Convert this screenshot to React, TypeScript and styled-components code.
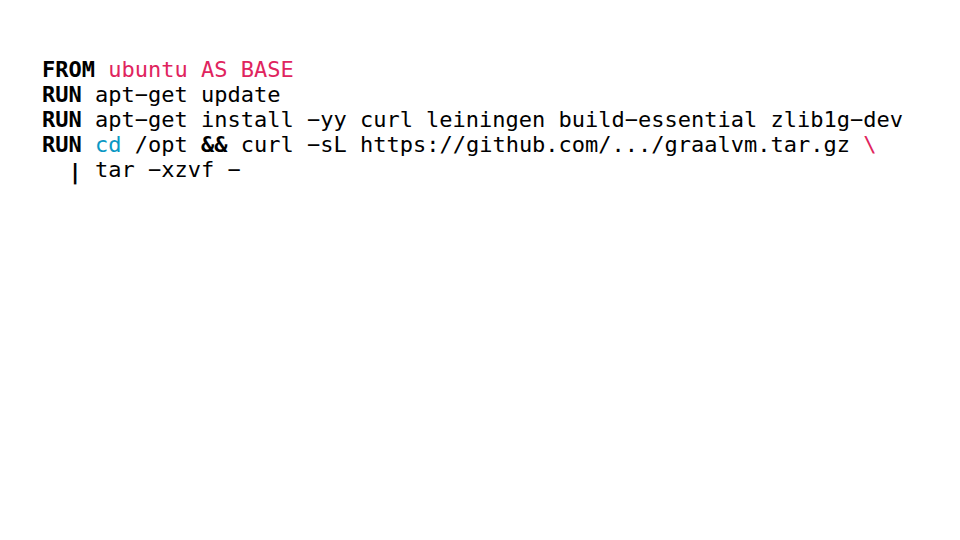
import React from "react";
import styled, { createGlobalStyle } from "styled-components";

const Global = createGlobalStyle`
  html, body { margin: 0; padding: 0; background: #ffffff; }
`;

const Slide = styled.div`
  width: 960px;
  height: 540px;
  box-sizing: border-box;
  padding: 57px 0 0 42px;
  background: #ffffff;
`;

const Code = styled.pre`
  margin: 0;
  font-family: "DejaVu Sans Mono", monospace;
  font-size: 22px;
  line-height: 25px;
  color: #000000;
`;

const Kw = styled.span`
  font-weight: bold;
`;

const Pipe = styled.span`
  font-weight: bold;
  vertical-align: -2px;
`;

const Str = styled.span<{ $tone: "red" | "cyan" }>`
  color: ${(p) => (p.$tone === "red" ? "#e0245e" : "#0a98c4")};
`;

export default function App() {
  return (
    <>
      <Global />
      <Slide>
        <Code>
          <Kw>FROM</Kw> <Str $tone="red">ubuntu AS BASE</Str>
          {"\n"}
          <Kw>RUN</Kw> apt−get update
          {"\n"}
          <Kw>RUN</Kw> apt−get install −yy curl leiningen build−essential zlib1g−dev
          {"\n"}
          <Kw>RUN</Kw> <Str $tone="cyan">cd</Str> /opt <Kw>&amp;&amp;</Kw> curl −sL https://github.com/.../graalvm.tar.gz <Str $tone="red">\</Str>
          {"\n"}
          {"  "}<Pipe>|</Pipe> tar −xzvf −
        </Code>
      </Slide>
    </>
  );
}
